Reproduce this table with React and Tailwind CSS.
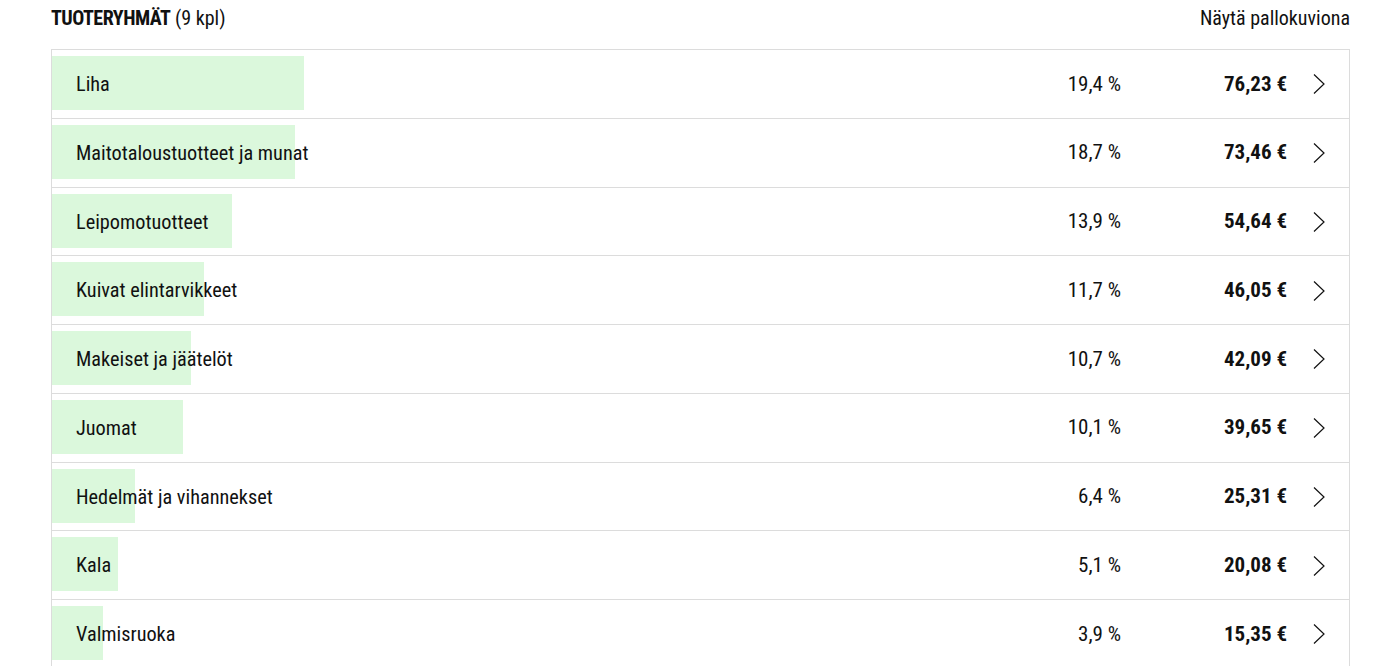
import React from 'react';

const groups = [
  { name: 'Liha', pct: 19.4, price: '76,23 €' },
  { name: 'Maitotaloustuotteet ja munat', pct: 18.7, price: '73,46 €' },
  { name: 'Leipomotuotteet', pct: 13.9, price: '54,64 €' },
  { name: 'Kuivat elintarvikkeet', pct: 11.7, price: '46,05 €' },
  { name: 'Makeiset ja jäätelöt', pct: 10.7, price: '42,09 €' },
  { name: 'Juomat', pct: 10.1, price: '39,65 €' },
  { name: 'Hedelmät ja vihannekset', pct: 6.4, price: '25,31 €' },
  { name: 'Kala', pct: 5.1, price: '20,08 €' },
  { name: 'Valmisruoka', pct: 3.9, price: '15,35 €' },
];

function Chevron() {
  return (
    <svg width="14" height="22" viewBox="0 0 14 22" fill="none" stroke="#111" strokeWidth="1.2">
      <polyline points="2,1.5 12,11 2,20.5" />
    </svg>
  );
}

function Row({ g }) {
  return (
    <div className="relative h-[68.75px] border-t border-[#dcdcdc] flex items-center pt-px">
      {/* share bar */}
      <div
        className="absolute left-0 top-[6px] h-[54px] bg-[#dbf8dc]"
        style={{ width: `${g.pct}%` }}
      />
      <span className="relative pl-6 flex-1 text-[20.3px]">{g.name}</span>
      <span className="relative w-[100px] text-right text-[21px]">
        {g.pct.toFixed(1).replace('.', ',')} %
      </span>
      <span className="relative w-[166px] text-right font-bold text-[21px]">{g.price}</span>
      <span className="relative w-[62px] flex justify-center pl-[1px]">
        <Chevron />
      </span>
    </div>
  );
}

export default function App() {
  return (
    <div className="bg-white min-h-screen font-['Roboto',sans-serif] font-stretch-condensed text-[20px] text-[#111]">
      <div className="w-[1300px] mx-auto pl-px">
        <div className="h-[49px] flex justify-between items-start pt-[3px]">
          <div>
            <span className="font-bold tracking-[-0.5px]">TUOTERYHMÄT</span> (9 kpl)
          </div>
          <div>Näytä pallokuviona</div>
        </div>
        <div className="border-l border-r border-[#dcdcdc]">
          {groups.map((g) => (
            <Row key={g.name} g={g} />
          ))}
        </div>
      </div>
    </div>
  );
}
